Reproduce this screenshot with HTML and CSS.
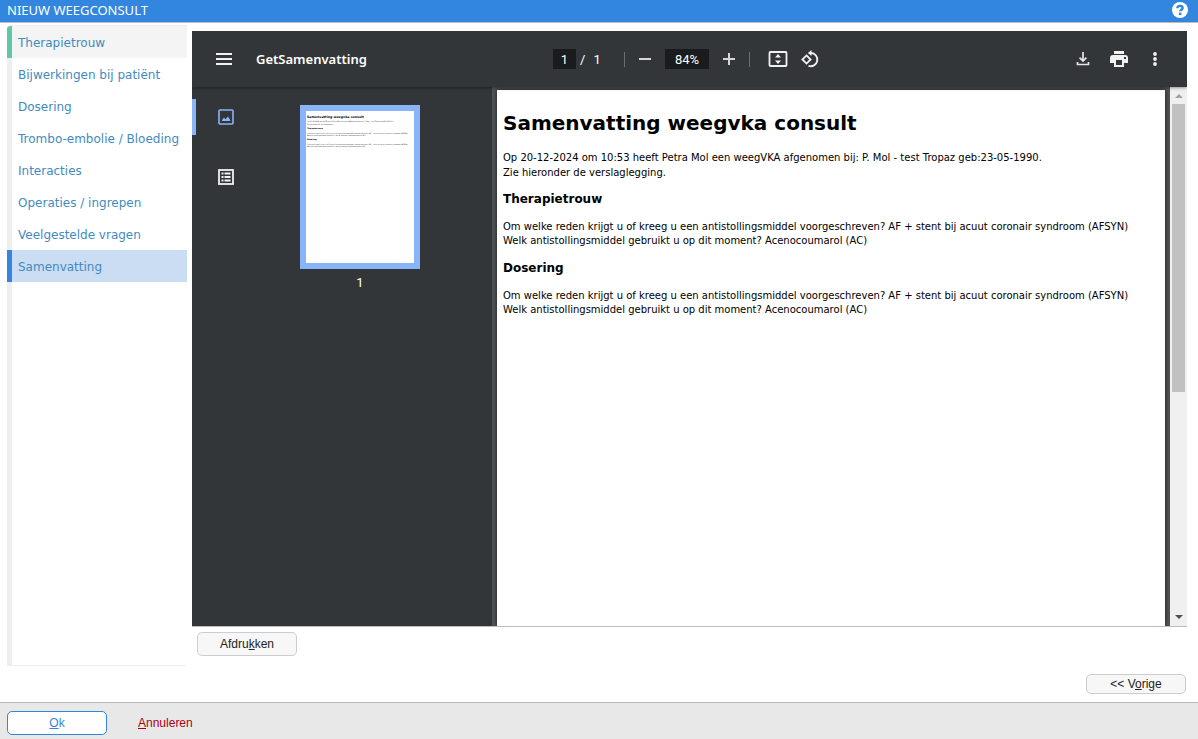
FILE: index.html
```html
<!DOCTYPE html>
<html lang="nl">
<head>
<meta charset="utf-8">
<title>Nieuw weegconsult</title>
<link rel="stylesheet" href="styles.css">
</head>
<body>
<div class="app">
  <header class="titlebar">
    <h1 class="titlebar-text">NIEUW WEEGCONSULT</h1>
    <button class="help" type="button" aria-label="Help">
      <svg width="16" height="16" viewBox="0 0 16 16"><circle cx="8" cy="8" r="8" fill="#fff"/><path d="M5.300 6.200C5.300 4.600 6.500 3.900 8 3.900s2.600.800 2.600 2.100c0 1.700-2.400 1.600-2.400 3.300" fill="none" stroke="#3286dd" stroke-width="2.400"/><rect x="6.900" y="10.600" width="2.500" height="2.400" fill="#3286dd"/></svg>
    </button>
  </header>

  <div class="workspace">
    <nav class="steps">
      <a class="step step-done" href="#">Therapietrouw</a>
      <a class="step" href="#">Bijwerkingen bij patiënt</a>
      <a class="step" href="#">Dosering</a>
      <a class="step" href="#">Trombo-embolie / Bloeding</a>
      <a class="step" href="#">Interacties</a>
      <a class="step" href="#">Operaties / ingrepen</a>
      <a class="step" href="#">Veelgestelde vragen</a>
      <a class="step step-current" href="#" aria-current="step">Samenvatting</a>
    </nav>

    <main class="content">
      <section class="viewer">
        <div class="toolbar">
          <div class="toolbar-start">
            <button class="tool" type="button" aria-label="Menu"><svg width="16" height="12" viewBox="0 0 16 12"><path d="M0 1h16M0 6h16M0 11h16" stroke="#f1f1f1" stroke-width="2"/></svg></button>
            <span class="doc-name">GetSamenvatting</span>
          </div>
          <div class="toolbar-center">
            <input class="field page-field" type="text" value="1" aria-label="Paginanummer">
            <span class="page-total"><span>/</span><span>1</span></span>
            <span class="separator"></span>
            <button class="tool" type="button" aria-label="Uitzoomen"><svg width="12" height="12" viewBox="0 0 12 12"><path d="M0 6h12" stroke="#d6d7d7" stroke-width="2"/></svg></button>
            <input class="field zoom-field" type="text" value="84%" aria-label="Zoomniveau">
            <button class="tool" type="button" aria-label="Inzoomen"><svg width="12" height="12" viewBox="0 0 12 12"><path d="M0 6h12M6 0v12" stroke="#d6d7d7" stroke-width="2"/></svg></button>
            <span class="separator separator-wide"></span>
            <button class="tool" type="button" aria-label="Aan pagina aanpassen"><svg width="20" height="16" viewBox="0 0 20 16"><rect x="1.500" y="1" width="17" height="14" rx="1" fill="none" stroke="#f1f1f1" stroke-width="1.800"/><path d="M10 3l3 3.500H7zM10 13l3-3.500H7z" fill="#f1f1f1"/></svg></button>
            <button class="tool" type="button" aria-label="Draaien"><svg width="18" height="18" viewBox="0 0 18 18"><path d="M5.500 5.400L9.600 9.500 5.500 13.600 1.400 9.500z" fill="none" stroke="#f1f1f1" stroke-width="1.800"/><path d="M9 3h1a6.600 6.600 0 1 1-2.500 12.800" fill="none" stroke="#f1f1f1" stroke-width="1.900"/><path d="M10.500 0v6L6.800 3z" fill="#f1f1f1"/></svg></button>
          </div>
          <div class="toolbar-end">
            <button class="tool" type="button" aria-label="Downloaden"><svg width="14" height="14" viewBox="0 0 14 14"><path d="M7 0v9M3.600 5.600L7 9l3.400-3.400M1.500 10v2.500h11V10" fill="none" stroke="#e6e6e6" stroke-width="1.700"/></svg></button>
            <button class="tool" type="button" aria-label="Printen"><svg width="18" height="16" viewBox="0 0 18 16"><path d="M4 0h10v3H4zM3 4h12a3 3 0 0 1 3 3v5h-4v4H4v-4H0V7a3 3 0 0 1 3-3zm3 5v5h6V9zM14 6v2h2V6z" fill="#f1f1f1" fill-rule="evenodd"/></svg></button>
            <button class="tool" type="button" aria-label="Meer acties"><svg width="4" height="14" viewBox="0 0 4 14"><circle cx="2" cy="2" r="1.900" fill="#f1f1f1"/><circle cx="2" cy="7" r="1.900" fill="#f1f1f1"/><circle cx="2" cy="12" r="1.900" fill="#f1f1f1"/></svg></button>
          </div>
        </div>

        <div class="viewer-body">
          <aside class="thumbs-panel">
            <div class="panel-modes">
              <button class="mode mode-active" type="button" aria-label="Miniaturen"><svg width="16" height="16" viewBox="0 0 16 16"><rect x="1" y="1" width="14" height="14" rx="1" fill="none" stroke="#8ab4f8" stroke-width="1.600"/><path d="M4 12v-1l2-2.500 1.500 1.800L10 7.500l2.200 3.500v1z" fill="#8ab4f8"/></svg></button>
              <button class="mode" type="button" aria-label="Overzicht"><svg width="16" height="16" viewBox="0 0 16 16"><rect x="1" y="1" width="14" height="14" fill="none" stroke="#f1f1f1" stroke-width="1.800"/><path d="M3.500 4.500h2M6.500 4.500h6M3.500 8h2M6.500 8h6M3.500 11.500h2M6.500 11.500h6" stroke="#f1f1f1" stroke-width="2"/></svg></button>
            </div>
            <figure class="thumb">
              <svg class="thumb-page" viewBox="0 0 668 940" aria-hidden="true">
                <g class="thumb-text">
                  <text class="thumb-h1" x="6" y="41">Samenvatting weegvka consult</text>
                  <text x="6" y="71">Op 20-12-2024 om 10:53 heeft Petra Mol een weegVKA afgenomen bij: P. Mol - test Tropaz geb:23-05-1990.</text>
                  <text x="6" y="86">Zie hieronder de verslaglegging.</text>
                  <text class="thumb-h2" x="6" y="113">Therapietrouw</text>
                  <text x="6" y="140">Om welke reden krijgt u of kreeg u een antistollingsmiddel voorgeschreven? AF + stent bij acuut coronair syndroom (AFSYN)</text>
                  <text x="6" y="154">Welk antistollingsmiddel gebruikt u op dit moment? Acenocoumarol (AC)</text>
                  <text class="thumb-h2" x="6" y="182">Dosering</text>
                  <text x="6" y="209">Om welke reden krijgt u of kreeg u een antistollingsmiddel voorgeschreven? AF + stent bij acuut coronair syndroom (AFSYN)</text>
                  <text x="6" y="223">Welk antistollingsmiddel gebruikt u op dit moment? Acenocoumarol (AC)</text>
                </g>
              </svg>
              <figcaption class="thumb-number">1</figcaption>
            </figure>
          </aside>

          <div class="page-area">
            <article class="page">
              <h2 class="page-title">Samenvatting weegvka consult</h2>
              <p class="page-intro">Op 20-12-2024 om 10:53 heeft Petra Mol een weegVKA afgenomen bij: P. Mol - test Tropaz geb:23-05-1990.<br>Zie hieronder de verslaglegging.</p>
              <h3 class="page-heading">Therapietrouw</h3>
              <p class="page-text">Om welke reden krijgt u of kreeg u een antistollingsmiddel voorgeschreven? AF + stent bij acuut coronair syndroom (AFSYN)<br>Welk antistollingsmiddel gebruikt u op dit moment? Acenocoumarol (AC)</p>
              <h3 class="page-heading">Dosering</h3>
              <p class="page-text">Om welke reden krijgt u of kreeg u een antistollingsmiddel voorgeschreven? AF + stent bij acuut coronair syndroom (AFSYN)<br>Welk antistollingsmiddel gebruikt u op dit moment? Acenocoumarol (AC)</p>
            </article>
          </div>

          <div class="scrollbar" aria-hidden="true">
            <svg class="scroll-arrow" width="8" height="4" viewBox="0 0 8 4"><path d="M0 4l4-4 4 4z" fill="#a3a3a3"/></svg>
            <div class="scroll-track"><div class="scroll-thumb"></div></div>
            <svg class="scroll-arrow" width="8" height="4" viewBox="0 0 8 4"><path d="M0 0l4 4 4-4z" fill="#505050"/></svg>
          </div>
        </div>
      </section>
      <div class="print-row"><button class="button" type="button">Afdru<u>k</u>ken</button></div>
      <div class="previous-row"><button class="button button-short" type="button">&lt;&lt; V<u>o</u>rige</button></div>
    </main>
  </div>

  <footer class="footer">
    <button class="button button-primary" type="button"><u>O</u>k</button>
    <button class="button-cancel" type="button"><u>A</u>nnuleren</button>
  </footer>
</div>
</body>
</html>
```

FILE: styles.css
```css
* {
  box-sizing: border-box;
}

body {
  margin: 0;
  background: #fff;
  font-family: "DejaVu Sans", Verdana, sans-serif;
}

button {
  margin: 0;
  padding: 0;
  border: 0;
  background: none;
}

svg {
  display: block;
}

.app {
  display: flex;
  flex-direction: column;
  height: 100vh;
}

.titlebar {
  display: flex;
  align-items: center;
  justify-content: space-between;
  height: 23px;
  padding: 0 10px 2px 7px;
  background: #3286dd;
  border-bottom: 1px solid #b9bcc0;
}

.titlebar-text {
  margin: 0;
  color: #fff;
  font-family: "Noto Sans", sans-serif;
  font-size: 13px;
  font-weight: 400;
  line-height: 20px;
}

.workspace {
  display: flex;
  flex: 1;
  min-height: 0;
  gap: 5px;
  padding: 2px 11px 0 7px;
}

.steps {
  flex: 0 0 180px;
  margin-bottom: 36px;
  background: linear-gradient(to right, #eee 5px, #fff 5px);
  border-top: 1px solid #eee;
  border-bottom: 1px solid #eee;
  border-top-left-radius: 4px;
  overflow: hidden;
}

.step {
  display: block;
  padding: 3px 0 0 6px;
  border-left: 5px solid #eee;
  color: #428bbf;
  font-size: 12px;
  line-height: 29px;
  text-decoration: none;
  white-space: nowrap;
}

.step-done {
  background: #f4f4f4;
  border-left-color: #62c6a8;
}

.step-current {
  background: #cbddf2;
  border-left-color: #3286dd;
}

.content {
  display: flex;
  flex: 1;
  flex-direction: column;
  min-width: 0;
  padding-top: 6px;
}

.viewer {
  display: flex;
  flex: 1;
  flex-direction: column;
  min-height: 0;
  border-bottom: 1px solid #b9bcc0;
}

.toolbar {
  position: relative;
  z-index: 1;
  display: grid;
  grid-template-columns: 1fr auto 1fr;
  align-items: center;
  height: 56px;
  padding: 0 16px;
  background: #323639;
  box-shadow: 0 0 4px rgba(0, 0, 0, 0.6);
  clip-path: inset(0 0 -6px 0);
  color: #fff;
}

.toolbar-start,
.toolbar-center,
.toolbar-end {
  display: flex;
  align-items: center;
}

.toolbar-start {
  gap: 16px;
}

.toolbar-end {
  justify-content: flex-end;
  gap: 4px;
}

.tool {
  display: grid;
  place-items: center;
  width: 32px;
  height: 32px;
}

.doc-name {
  font-family: "Noto Sans", sans-serif;
  font-size: 13px;
  font-weight: 600;
}

.field {
  height: 20px;
  padding: 0;
  border: 0;
  background: #191b1c;
  color: #fff;
  font-family: Roboto, sans-serif;
  font-size: 13px;
  text-align: center;
}

.page-field {
  width: 23px;
}

.zoom-field {
  width: 44px;
  margin: 0 4px;
}

.page-total {
  display: flex;
  gap: 8px;
  width: 48px;
  padding-left: 4px;
  font-family: Roboto, sans-serif;
  font-size: 13px;
}

.separator {
  width: 1px;
  height: 15px;
  margin-right: 4px;
  background: #6b6e70;
}

.separator-wide {
  margin: 0 12px 0 4px;
}

.viewer-body {
  display: flex;
  flex: 1;
  min-height: 0;
}

.thumbs-panel {
  display: grid;
  grid-template-columns: 68px 1fr;
  flex: 0 0 300px;
  align-items: start;
  padding-top: 12px;
  background: #323639;
}

.panel-modes {
  display: flex;
  flex-direction: column;
  gap: 24px;
}

.mode {
  display: grid;
  place-items: center;
  width: 68px;
  height: 36px;
  padding-right: 4px;
  border-left: 4px solid transparent;
}

.mode-active {
  border-left-color: #8ab4f8;
  border-radius: 0 2px 2px 0;
}

.thumb {
  margin: 6px 0 0 40px;
  width: 120px;
}

.thumb-page {
  width: 100%;
  height: 164px;
  background: #fff;
  border: 6px solid #8ab4f8;
}

.thumb-text {
  fill: #000;
  font-size: 10px;
}

.thumb-h1 {
  font-size: 20px;
  font-weight: 700;
}

.thumb-h2 {
  font-size: 12px;
  font-weight: 700;
}

.thumb-number {
  margin-top: 6px;
  color: #fff;
  font-family: Roboto, sans-serif;
  font-size: 13px;
  line-height: 16px;
  text-align: center;
}

.page-area {
  flex: 1;
  min-width: 0;
  padding: 3px 5px 0;
  background: #525659;
  overflow: hidden;
}

.page {
  height: 100%;
  padding: 19px 6px 0;
  background: #fff;
  box-shadow: 0 0 5px rgba(0, 0, 0, 0.7);
  color: #000;
  overflow: hidden;
}

.page-title {
  margin: 0 0 13px;
  font-size: 20px;
  line-height: 28px;
}

.page-intro,
.page-text {
  margin: 0;
  font-size: 10px;
  line-height: 14px;
}

.page-intro {
  line-height: 15px;
}

.page-text {
  padding-bottom: 1px;
}

.page-heading {
  margin: 11px 0 13px;
  font-size: 12px;
  line-height: 16px;
}

.scrollbar {
  display: flex;
  flex: 0 0 17px;
  flex-direction: column;
  align-items: center;
  padding: 7px 0;
  background: #f0f0f0;
}

.scroll-arrow {
  flex: none;
}

.scroll-track {
  flex: 1;
  width: 13px;
  padding: 6px 0;
}

.scroll-thumb {
  width: 13px;
  height: 57%;
  background: #c1c1c1;
}

.print-row {
  padding: 5px 5px 0;
}

.previous-row {
  display: flex;
  justify-content: flex-end;
  padding: 18px 1px 8px 0;
}

.button {
  width: 100px;
  height: 24px;
  background: #f7f7f7;
  border: 1px solid #cdcdcd;
  border-radius: 5px;
  color: #222;
  font-family: "Liberation Sans", Arial, sans-serif;
  font-size: 12px;
  line-height: 20px;
}

.button-short {
  height: 20px;
  line-height: 18px;
}

.button-primary {
  background: #fff;
  border-color: #3286dd;
  color: #3286dd;
}

.footer {
  display: flex;
  align-items: center;
  gap: 31px;
  height: 37px;
  padding: 4px 7px 0;
  background: #e8e8e8;
  border-top: 1px solid #b9b9b9;
}

.button-cancel {
  color: #a90012;
  font-family: "Liberation Sans", Arial, sans-serif;
  font-size: 12px;
}
```
